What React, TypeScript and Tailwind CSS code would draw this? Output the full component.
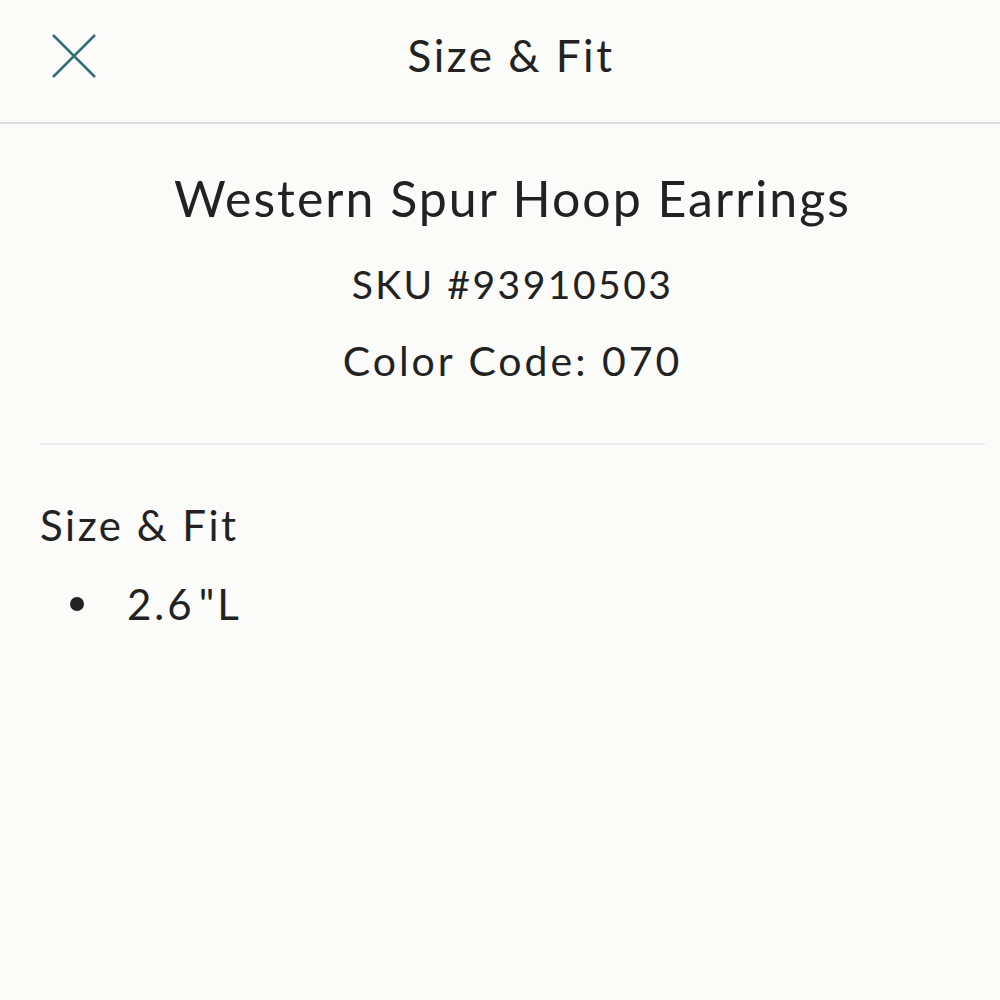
import React from 'react';

const App: React.FC = () => {
    return (
        <div className="min-h-screen w-[1000px] bg-[#fbfbf9] text-[#222] font-['Lato',sans-serif]">
            <div className="relative flex h-[124px] items-center justify-center border-b-2 border-[#dcdcdc]">
                <button className="absolute left-[50px] top-[32px] text-[#336f77]">
                    <svg width="48" height="48" viewBox="0 0 48 48" fill="none" stroke="currentColor" strokeWidth="2.5">
                        <path d="M3 3 L45 45 M45 3 L3 45" />
                    </svg>
                </button>
                <h1 className="-mt-[12px] ml-[22px] text-[44px] leading-none tracking-[2.5px]">Size &amp; Fit</h1>
            </div>
            <div className="ml-[40px] mr-[15px] flex flex-col items-center border-b-2 border-[#ececec] pt-[42px] pb-[56px]">
                <h2 className="text-[50px] leading-[1.3] tracking-[2px]">Western Spur Hoop Earrings</h2>
                <p className="mt-[28px] text-[39px] leading-[1.3] tracking-[2.5px]">SKU #93910503</p>
                <p className="mt-[24px] text-[41px] leading-[1.3] tracking-[3px]">Color Code: 070</p>
            </div>
            <div className="px-[40px] pt-[53px]">
                <h3 className="text-[42px] leading-[1.3] tracking-[2.5px]">Size &amp; Fit</h3>
                <ul className="mt-[24px] pl-[30px]">
                    <li className="flex items-center gap-[43px] text-[42px] leading-[1.3] tracking-[3px]">
                        <span className="h-[14px] w-[14px] rounded-full bg-[#222]" />
                        <span>
                            2.6<span className="ml-[4px]">&quot;L</span>
                        </span>
                    </li>
                </ul>
            </div>
        </div>
    );
};

export default App;
